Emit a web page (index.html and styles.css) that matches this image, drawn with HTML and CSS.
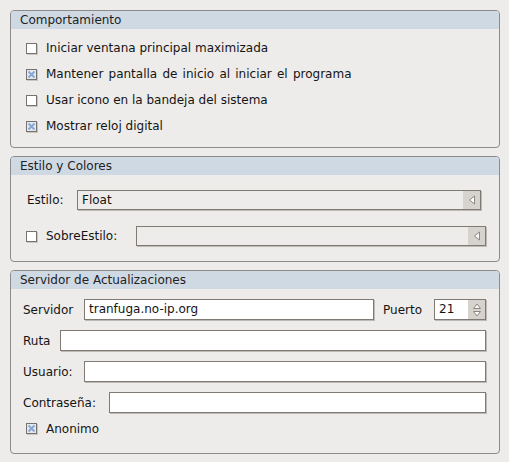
FILE: index.html
```html
<!DOCTYPE html>
<html>
<head>
<meta charset="utf-8">
<link rel="stylesheet" href="styles.css">
</head>
<body>
<div class="page">
  <section class="group g1">
    <div class="group-title">Comportamiento</div>
    <div class="group-body checks">
      <label class="row"><span class="cb"></span>Iniciar ventana principal maximizada</label>
      <label class="row"><span class="cb checked"><svg viewBox="0 0 9 9"><path d="M1.5 1.5L7.5 7.5M7.5 1.5L1.5 7.5"/></svg></span><span class="wide">Mantener pantalla de inicio al iniciar el programa</span></label>
      <label class="row"><span class="cb"></span>Usar icono en la bandeja del sistema</label>
      <label class="row"><span class="cb checked"><svg viewBox="0 0 9 9"><path d="M1.5 1.5L7.5 7.5M7.5 1.5L1.5 7.5"/></svg></span>Mostrar reloj digital</label>
    </div>
  </section>

  <section class="group g2">
    <div class="group-title">Estilo y Colores</div>
    <div class="group-body styles">
      <div class="frow estilo">
        <span class="lbl">Estilo:</span>
        <div class="combo"><span class="combo-text">Float</span><span class="combo-btn"><svg viewBox="0 0 8 10"><path d="M6.5 1L1.5 5L6.5 9Z"/></svg></span></div>
      </div>
      <div class="frow sobre">
        <span class="cb"></span>
        <span class="lbl sobre-lbl">SobreEstilo:</span>
        <div class="combo disabled"><span class="combo-text"></span><span class="combo-btn"><svg viewBox="0 0 8 10"><path d="M6.5 1L1.5 5L6.5 9Z"/></svg></span></div>
      </div>
    </div>
  </section>

  <section class="group g3">
    <div class="group-title">Servidor de Actualizaciones</div>
    <div class="group-body server">
      <div class="frow">
        <span class="lbl w-servidor">Servidor</span>
        <div class="input server-input">tranfuga.no-ip.org</div>
        <span class="lbl puerto-lbl">Puerto</span>
        <div class="spin"><span class="spin-text">21</span><span class="spin-btns"><svg viewBox="0 0 10 8"><path d="M1.5 6.5L5 2L8.5 6.5Z"/></svg><svg viewBox="0 0 10 8"><path d="M1.5 1.5L5 6L8.5 1.5Z"/></svg></span></div>
      </div>
      <div class="frow">
        <span class="lbl w-ruta">Ruta</span>
        <div class="input grow"></div>
      </div>
      <div class="frow">
        <span class="lbl w-usuario">Usuario:</span>
        <div class="input grow"></div>
      </div>
      <div class="frow">
        <span class="lbl w-contra">Contraseña:</span>
        <div class="input grow"></div>
      </div>
      <label class="row anon"><span class="cb checked"><svg viewBox="0 0 9 9"><path d="M1.5 1.5L7.5 7.5M7.5 1.5L1.5 7.5"/></svg></span>Anonimo</label>
    </div>
  </section>
</div>
</body>
</html>
```

FILE: styles.css
```css
* { box-sizing: border-box; }
html, body {
  margin: 0;
  padding: 0;
  background: #edecea;
}
body {
  font-family: "DejaVu Sans", "Liberation Sans", sans-serif;
  font-size: 12px;
  color: #141414;
  width: 509px;
  height: 462px;
  overflow: hidden;
}
.page {
  padding: 10px 9px 0 10px;
  display: flex;
  flex-direction: column;
  gap: 8px;
}
.group {
  border: 1px solid #8d8b89;
  border-radius: 4px;
  background: #edecea;
}
.g1 { height: 138px; }
.g2 { height: 106px; }
.g3 { height: 184px; }
.group-title {
  height: 18px;
  line-height: 18px;
  padding-left: 9px;
  background: #cfd9e4;
  border-radius: 3px 3px 0 0;
  color: #222;
}
.checks {
  padding: 6px 0 0 15px;
  display: flex;
  flex-direction: column;
}
.row {
  height: 26px;
  display: flex;
  align-items: center;
}
.wide { word-spacing: 1.4px; }
.cb {
  width: 11px;
  height: 11px;
  border: 1px solid #76726e;
  background: #fff;
  box-shadow: 1px 1px 0 #c9c5c1;
  margin-right: 9px;
  flex: none;
  display: flex;
  align-items: center;
  justify-content: center;
}
.cb.checked {
  background: #e4e9f0;
}
.cb svg {
  width: 9px;
  height: 9px;
}
.cb svg path {
  stroke: #86a6d4;
  stroke-width: 1.8;
  fill: none;
}
.styles {
  padding: 15px 0 0 15px;
  display: flex;
  flex-direction: column;
  gap: 16px;
}
.frow {
  display: flex;
  align-items: center;
}
.lbl { flex: none; }
.estilo { padding-left: 1px; }
.estilo .lbl { width: 50px; }
.estilo .combo { width: 404px; }
.sobre-lbl { width: 90px; }
.sobre .combo { width: 350px; }
.combo {
  height: 20px;
  border: 1px solid #7f7a74;
  box-shadow: 1px 1px 0 #bdb9b4;
  display: flex;
  background: #edecea;
}
.combo-text {
  flex: 1;
  padding-left: 4px;
  line-height: 18px;
}
.combo-btn {
  width: 17px;
  background: #d6d2cd;
  display: flex;
  align-items: center;
  justify-content: center;
}
.combo-btn svg {
  width: 8px;
  height: 10px;
}
.combo-btn path, .spin-btns path {
  fill: #fbfbfa;
  stroke: #8c8781;
  stroke-width: 1;
}
.server {
  padding: 10px 0 0 12px;
  display: flex;
  flex-direction: column;
  gap: 10px;
}
.input {
  height: 21px;
  border: 1px solid #7f7a74;
  box-shadow: 1px 1px 0 #bdb9b4;
  background: #fff;
  padding-left: 4px;
  line-height: 19px;
}
.grow { flex: none; }
.w-servidor { width: 61px; }
.w-ruta { width: 37px; }
.w-usuario { width: 61px; }
.w-contra { width: 86px; }
.w-ruta + .input { width: 426px; }
.w-usuario + .input { width: 402px; }
.w-contra + .input { width: 377px; }
.server-input { width: 290px; }
.puerto-lbl { margin-left: 9px; width: 51px; }
.spin {
  width: 52px;
  height: 21px;
  border: 1px solid #7f7a74;
  box-shadow: 1px 1px 0 #bdb9b4;
  background: #fff;
  display: flex;
}
.spin-text {
  flex: 1;
  padding-left: 4px;
  line-height: 19px;
}
.spin-btns {
  width: 17px;
  background: #d6d2cd;
  display: flex;
  flex-direction: column;
  align-items: center;
  justify-content: center;
}
.spin-btns svg {
  width: 10px;
  height: 8px;
  display: block;
}
.anon {
  height: 21px;
  margin-top: -5px;
  padding-left: 3px;
}
```
